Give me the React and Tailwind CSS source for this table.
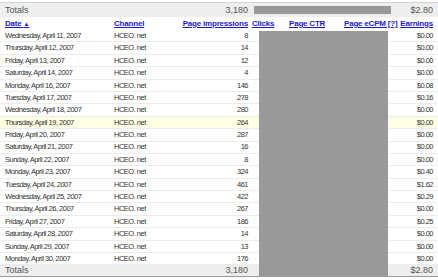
import React from "react";

const rows = [
  ["Wednesday, April 11, 2007", "8", "$0.00"],
  ["Thursday, April 12, 2007", "14", "$0.00"],
  ["Friday, April 13, 2007", "12", "$0.00"],
  ["Saturday, April 14, 2007", "4", "$0.00"],
  ["Monday, April 16, 2007", "146", "$0.08"],
  ["Tuesday, April 17, 2007", "278", "$0.16"],
  ["Wednesday, April 18, 2007", "280", "$0.00"],
  ["Thursday, April 19, 2007", "264", "$0.00", true],
  ["Friday, April 20, 2007", "287", "$0.00"],
  ["Saturday, April 21, 2007", "16", "$0.00"],
  ["Sunday, April 22, 2007", "8", "$0.00"],
  ["Monday, April 23, 2007", "324", "$0.40"],
  ["Tuesday, April 24, 2007", "461", "$1.62"],
  ["Wednesday, April 25, 2007", "422", "$0.29"],
  ["Thursday, April 26, 2007", "267", "$0.00"],
  ["Friday, April 27, 2007", "186", "$0.25"],
  ["Saturday, April 28, 2007", "14", "$0.00"],
  ["Sunday, April 29, 2007", "13", "$0.00"],
  ["Monday, April 30, 2007", "176", "$0.00"],
];

const grid = "grid grid-cols-[109px_66px_68px_41px_55px_56px_33px] px-[5px] items-center";

export default function App() {
  return (
    <div className="relative w-[438px] h-[280px] bg-white overflow-hidden pt-[2px] font-['Liberation_Sans',Arial,sans-serif]">
      <div className="border-t border-[#d4d4d4]">
        <div className={`${grid} h-[14px] bg-[#eeeeee] text-[9px] text-[#555]`}>
          <div className="col-span-2 leading-none">Totals</div>
          <div className="text-right leading-none">3,180</div>
          <div className="col-span-3 ml-[6px] mr-[9px] h-[8px] bg-[#999999]" />
          <div className="text-right leading-none">$2.80</div>
        </div>
        <div className={`${grid} h-[13px] text-[8px] font-bold text-[#1a1acc] underline tracking-[-0.2px] leading-none`}>
          <div>Date <span className="no-underline text-[6px]">▲</span></div>
          <div>Channel</div>
          <div className="text-right whitespace-nowrap">Page impressions</div>
          <div className="pl-[4px]">Clicks</div>
          <div>Page CTR</div>
          <div className="whitespace-nowrap">Page eCPM [?]</div>
          <div className="text-right">Earnings</div>
        </div>
        {rows.map(([d, imp, earn, hl]) => (
          <div
            key={d}
            className={`${grid} h-[12.4px] border-b border-[#ececec] text-[7.5px] tracking-[-0.5px] text-[#333] leading-none ${hl ? "bg-[#ffffe6]" : ""}`}
          >
            <div className="whitespace-nowrap">{d}</div>
            <div>HCEO. net</div>
            <div className="text-right">{imp}</div>
            <div />
            <div />
            <div />
            <div className="text-right">{earn}</div>
          </div>
        ))}
        <div className={`${grid} h-[12px] bg-[#eeeeee] text-[9px] text-[#555] border-b border-[#999]`}>
          <div className="col-span-2 leading-none">Totals</div>
          <div className="text-right leading-none">3,180</div>
          <div className="col-span-3" />
          <div className="text-right leading-none">$2.80</div>
        </div>
      </div>
      <div className="absolute left-[259px] top-[31px] w-[129px] h-[246px] bg-[#999999]" />
    </div>
  );
}
